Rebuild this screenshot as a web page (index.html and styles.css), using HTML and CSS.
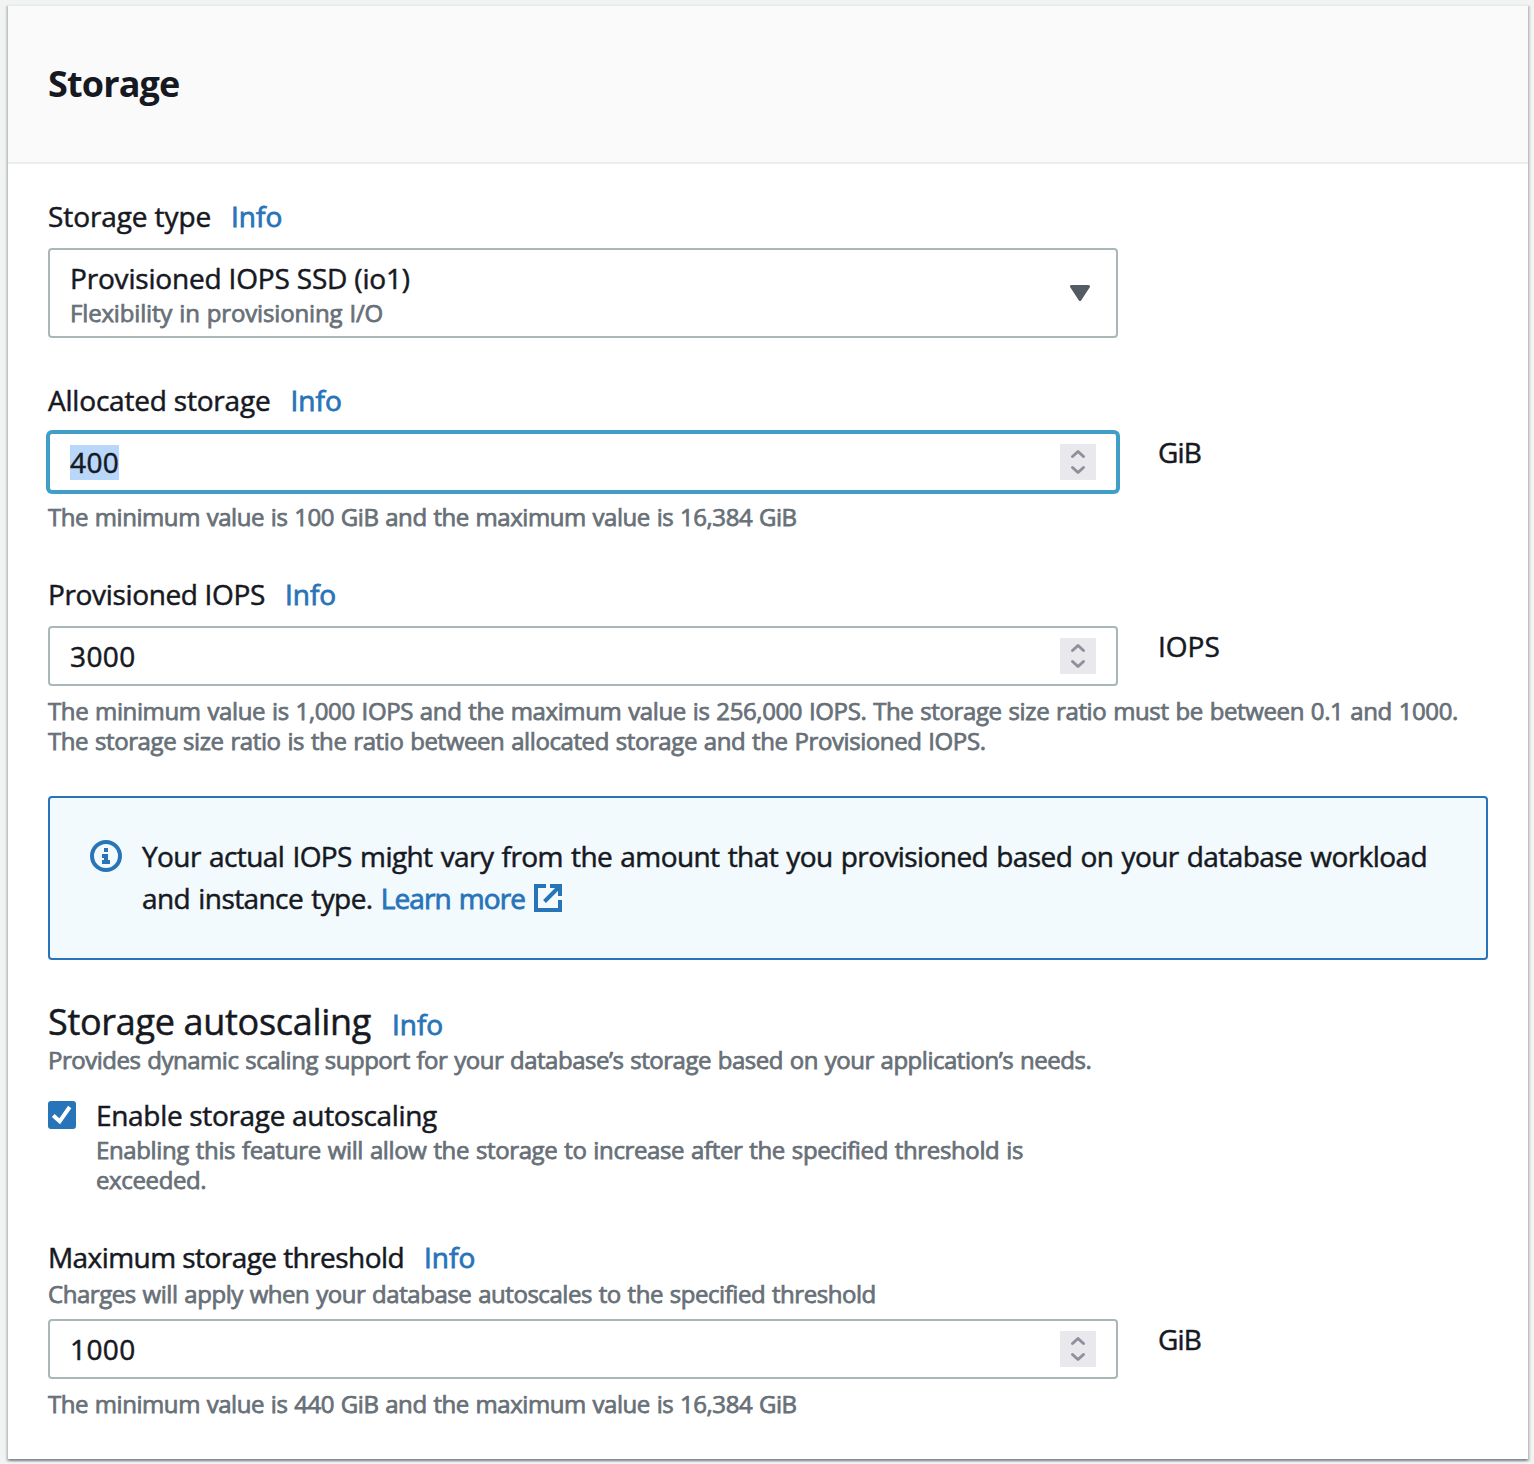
FILE: index.html
```html
<!DOCTYPE html>
<html lang="en">
<head>
<meta charset="utf-8">
<title>Storage</title>
<link rel="stylesheet" href="styles.css">
</head>
<body>
<svg width="0" height="0" class="sprite" aria-hidden="true">
  <symbol id="spin" viewBox="0 0 36 36"><path d="M12.500 12.500L18 7.500l5.500 5M12.500 23.500l5.500 5 5.500-5" fill="none" stroke="#8f8f9d" stroke-width="3" stroke-linecap="round" stroke-linejoin="round"/></symbol>
</svg>
<main class="card">
  <header class="card-header"><h1 class="title">Storage</h1></header>
  <div class="card-body">
    <section class="field">
      <div class="label-row"><span class="label label-type">Storage type</span><a class="info">Info</a></div>
      <div class="select">
        <div>
          <div class="select-value">Provisioned IOPS SSD (io1)</div>
          <div class="hint hint-select">Flexibility in provisioning I/O</div>
        </div>
        <svg class="caret" width="20" height="16" viewBox="0 0 20 16"><path d="M1.500 1.500h17L10 14.500z" fill="#545b64" stroke="#545b64" stroke-width="3" stroke-linejoin="round"/></svg>
      </div>
    </section>

    <section class="field">
      <div class="label-row"><span class="label label-allocated">Allocated storage</span><a class="info">Info</a></div>
      <div class="input-row">
        <div class="input focused"><span class="selected">400</span><svg class="spinner"><use href="#spin"/></svg></div>
        <span class="unit">GiB</span>
      </div>
      <div class="hint hint-below hint-range">The minimum value is 100 GiB and the maximum value is 16,384 GiB</div>
    </section>

    <section class="field">
      <div class="label-row"><span class="label label-iops">Provisioned IOPS</span><a class="info">Info</a></div>
      <div class="input-row">
        <div class="input"><span>3000</span><svg class="spinner"><use href="#spin"/></svg></div>
        <span class="unit unit-iops">IOPS</span>
      </div>
      <div class="hint hint-below"><span class="hint-ratio">The minimum value is 1,000 IOPS and the maximum value is 256,000 IOPS. The storage size ratio must be between 0.1 and 1000.</span><br><span class="hint-ratio-note">The storage size ratio is the ratio between allocated storage and the Provisioned IOPS.</span></div>
    </section>

    <section class="alert">
      <svg class="alert-icon" width="32" height="32" viewBox="0 0 32 32"><circle cx="16" cy="16" r="14" fill="none" stroke="#2874b9" stroke-width="4"/><path d="M14 8h4v4h-4zM12 14h6v6h2v4h-8v-4h2v-2h-2z" fill="#2874b9"/></svg>
      <p class="alert-text">Your actual IOPS might vary from the amount that you provisioned based on your database workload<br><span class="alert-end">and instance type.</span> <a class="learn">Learn more</a><svg class="external" width="28" height="28" viewBox="0 0 28 28"><path d="M12 2H2v24h24V16M16 2h10v10M24.500 3.500L10.500 17.500" fill="none" stroke="#2874b9" stroke-width="4"/><path d="M17 0h11v11z" fill="#2874b9"/></svg></p>
    </section>

    <section class="autoscaling">
      <div class="heading-row"><h2 class="heading">Storage autoscaling</h2><a class="info">Info</a></div>
      <div class="hint hint-heading">Provides dynamic scaling support for your database’s storage based on your application’s needs.</div>
      <div class="check-row">
        <svg class="checkbox" width="28" height="28" viewBox="0 0 28 28"><rect width="28" height="28" rx="3" fill="#2874b9"/><path d="M5.200 14.500l6.500 5.800L21.700 6" fill="none" stroke="#fff" stroke-width="4"/></svg>
        <div>
          <div class="check-label">Enable storage autoscaling</div>
          <div class="hint hint-check">Enabling this feature will allow the storage to increase after the specified threshold is<br>exceeded.</div>
        </div>
      </div>
    </section>

    <section class="field">
      <div class="label-row label-row-tight"><span class="label label-threshold">Maximum storage threshold</span><a class="info">Info</a></div>
      <div class="hint hint-above">Charges will apply when your database autoscales to the specified threshold</div>
      <div class="input-row">
        <div class="input"><span>1000</span><svg class="spinner"><use href="#spin"/></svg></div>
        <span class="unit">GiB</span>
      </div>
      <div class="hint hint-below hint-range">The minimum value is 440 GiB and the maximum value is 16,384 GiB</div>
    </section>
  </div>
</main>
</body>
</html>
```
FILE: styles.css
```css
* { box-sizing: border-box; }
body {
  margin: 0;
  padding: 4px 6px 5px 8px;
  height: 1464px;
  overflow: hidden;
  background: #f2f3f3;
  color: #16191f;
  font: 28px "Open Sans", sans-serif;
  -webkit-text-stroke: 0.5px currentColor;
  white-space: nowrap;
}
h1, h2, p { margin: 0; }
.sprite { position: absolute; }

.card {
  height: 1455px;
  background: #fff;
  border-top: 2px solid #eaeded;
  box-shadow: 0 2px 2px 0 rgba(0, 28, 36, .3), 2px 2px 2px 0 rgba(0, 28, 36, .15), -2px 2px 2px 0 rgba(0, 28, 36, .15);
}
.card-header {
  display: flex;
  align-items: center;
  height: 158px;
  padding: 0 40px 2px;
  background: #fafafa;
  border-bottom: 2px solid #eaeded;
}
.title { font-size: 36px; font-weight: 700; letter-spacing: -0.85px; -webkit-text-stroke-width: 0; }
.card-body {
  display: flex;
  flex-direction: column;
  gap: 40px;
  padding: 30px 40px 40px;
}

.label-row { display: flex; line-height: 44px; margin-bottom: 10px; }
.label-row-tight { margin-bottom: 0; }
.label-type { letter-spacing: -0.1px; }
.label-allocated { letter-spacing: -0.2px; }
.label-iops { letter-spacing: -0.35px; }
.label-threshold { letter-spacing: -0.56px; }
.info { margin-left: 20px; color: #2874b9; -webkit-text-stroke-width: 0.8px; }

.select, .input {
  display: flex;
  align-items: center;
  justify-content: space-between;
  width: 1070px;
  border: 2px solid #aab7b8;
  border-radius: 4px;
  background: #fff;
}
.select { height: 90px; padding: 0 26px 0 20px; }
.select-value { line-height: 40px; letter-spacing: -0.18px; }
.input-row { display: flex; }
.input { height: 60px; padding: 0 20px; }
.input span { line-height: 35px; margin-top: 1px; margin-bottom: 1px; letter-spacing: 0.4px; }
.focused { border-color: #419fc7; box-shadow: 0 0 0 2px #419fc7; }
.input .selected { background: #b9d7fb; }
.spinner { width: 36px; height: 36px; background: #e9e9ed; }
.unit { margin-left: 40px; line-height: 40px; letter-spacing: -0.8px; }
.unit-iops { letter-spacing: 0; }

.hint {
  color: #687078;
  font-size: 24px;
  line-height: 30px;
  letter-spacing: -0.16px;
  word-spacing: 1px;
  -webkit-text-stroke-width: 0.75px;
}
.hint-below { margin-top: 10px; }
.hint-above { margin-bottom: 10px; letter-spacing: -0.45px; }
.hint-range { letter-spacing: -0.45px; }
.hint-ratio { letter-spacing: -0.385px; }
.hint-ratio-note { letter-spacing: -0.41px; }
.hint-heading { letter-spacing: -0.478px; }
.hint-check { letter-spacing: -0.37px; }

.alert {
  display: flex;
  height: 164px;
  padding: 37px 40px 0;
  background: #f2fafd;
  border: 2px solid #2874b9;
  border-radius: 4px;
}
.alert-icon { margin: 5px 20px 0 0; }
.alert-text { line-height: 42px; letter-spacing: -0.583px; word-spacing: 1.5px; }
.learn { color: #2874b9; letter-spacing: -0.88px; -webkit-text-stroke-width: 0.8px; }
.external { margin-left: 9px; vertical-align: -3px; }

.heading-row { display: flex; height: 45px; line-height: 44px; }
.heading { font-size: 36px; font-weight: 400; letter-spacing: -0.31px; }
.heading-row .info { margin-left: 21px; padding-top: 2px; }
.check-row { display: flex; gap: 20px; margin-top: 20px; }
.checkbox { margin-top: 6px; }
.check-label { line-height: 40px; letter-spacing: -0.317px; }
```
